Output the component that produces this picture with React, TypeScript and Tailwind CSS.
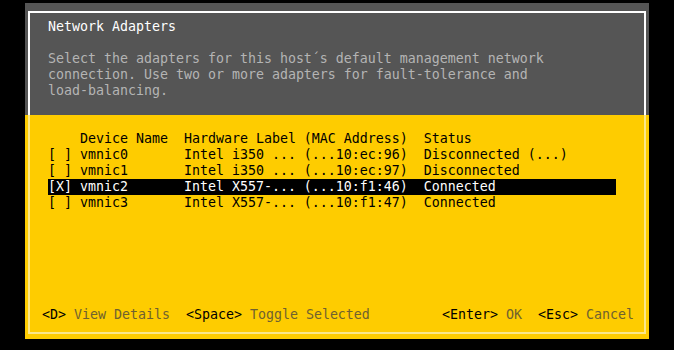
import React from 'react';

const adapters = [
  { sel: false, name: 'vmnic0', label: 'Intel i350 ...', mac: '(...10:ec:96)', status: 'Disconnected (...)' },
  { sel: false, name: 'vmnic1', label: 'Intel i350 ...', mac: '(...10:ec:97)', status: 'Disconnected' },
  { sel: true, name: 'vmnic2', label: 'Intel X557-...', mac: '(...10:f1:46)', status: 'Connected' },
  { sel: false, name: 'vmnic3', label: 'Intel X557-...', mac: '(...10:f1:47)', status: 'Connected' },
];

function row(a: (typeof adapters)[number]) {
  return (
    (a.sel ? '[X] ' : '[ ] ') +
    a.name.padEnd(13) +
    (a.label + ' ' + a.mac).padEnd(30) +
    a.status
  );
}

const font = { fontFamily: '"DejaVu Sans Mono", "Liberation Mono", monospace' };

export default function App() {
  return (
    <div className="w-[674px] h-[350px] bg-black pt-[3px] pl-[25px]" style={font}>
      <div className="w-[624px] h-[336px] flex flex-col text-[13.29px] leading-[16px]">
        {/* gray header area */}
        <div className="h-[112px] bg-[#555555] pt-[8px] px-[3px] flex flex-col">
          <div className="flex-1 border-2 border-b-0 border-white pl-[18px] pt-[6px]">
            <div className="text-white whitespace-pre">Network Adapters</div>
            <div className="mt-[16px] text-[#b4b4b4] whitespace-pre">
              <div>Select the adapters for this host´s default management network</div>
              <div>connection. Use two or more adapters for fault-tolerance and</div>
              <div>load-balancing.</div>
            </div>
          </div>
        </div>

        {/* yellow list area */}
        <div className="h-[224px] bg-[#fecc00] px-[3px] pb-[5px] flex flex-col">
          <div className="flex-1 flex flex-col border-2 border-t-0 border-[#fbe78a] pt-[16px] pb-[9px]">
            <div className="pl-[18px] text-black whitespace-pre">
              <div className="w-[568px]">    Device Name  Hardware Label (MAC Address)  Status</div>
              {adapters.map((a) => (
                <div
                  key={a.name}
                  className={a.sel ? 'w-[568px] bg-black text-white' : 'w-[568px]'}
                >
                  {row(a)}
                </div>
              ))}
            </div>

            <div className="mt-auto flex justify-between pl-[12px] pr-[10px] whitespace-pre">
              <div>
                <span className="text-black">{'<D>'}</span>
                <span className="text-[#6f6130]"> View Details</span>
                <span className="text-black">{'  <Space>'}</span>
                <span className="text-[#6f6130]"> Toggle Selected</span>
              </div>
              <div>
                <span className="text-black">{'<Enter>'}</span>
                <span className="text-[#6f6130]"> OK</span>
                <span className="text-black">{'  <Esc>'}</span>
                <span className="text-[#6f6130]"> Cancel</span>
              </div>
            </div>
          </div>
        </div>
      </div>
    </div>
  );
}
